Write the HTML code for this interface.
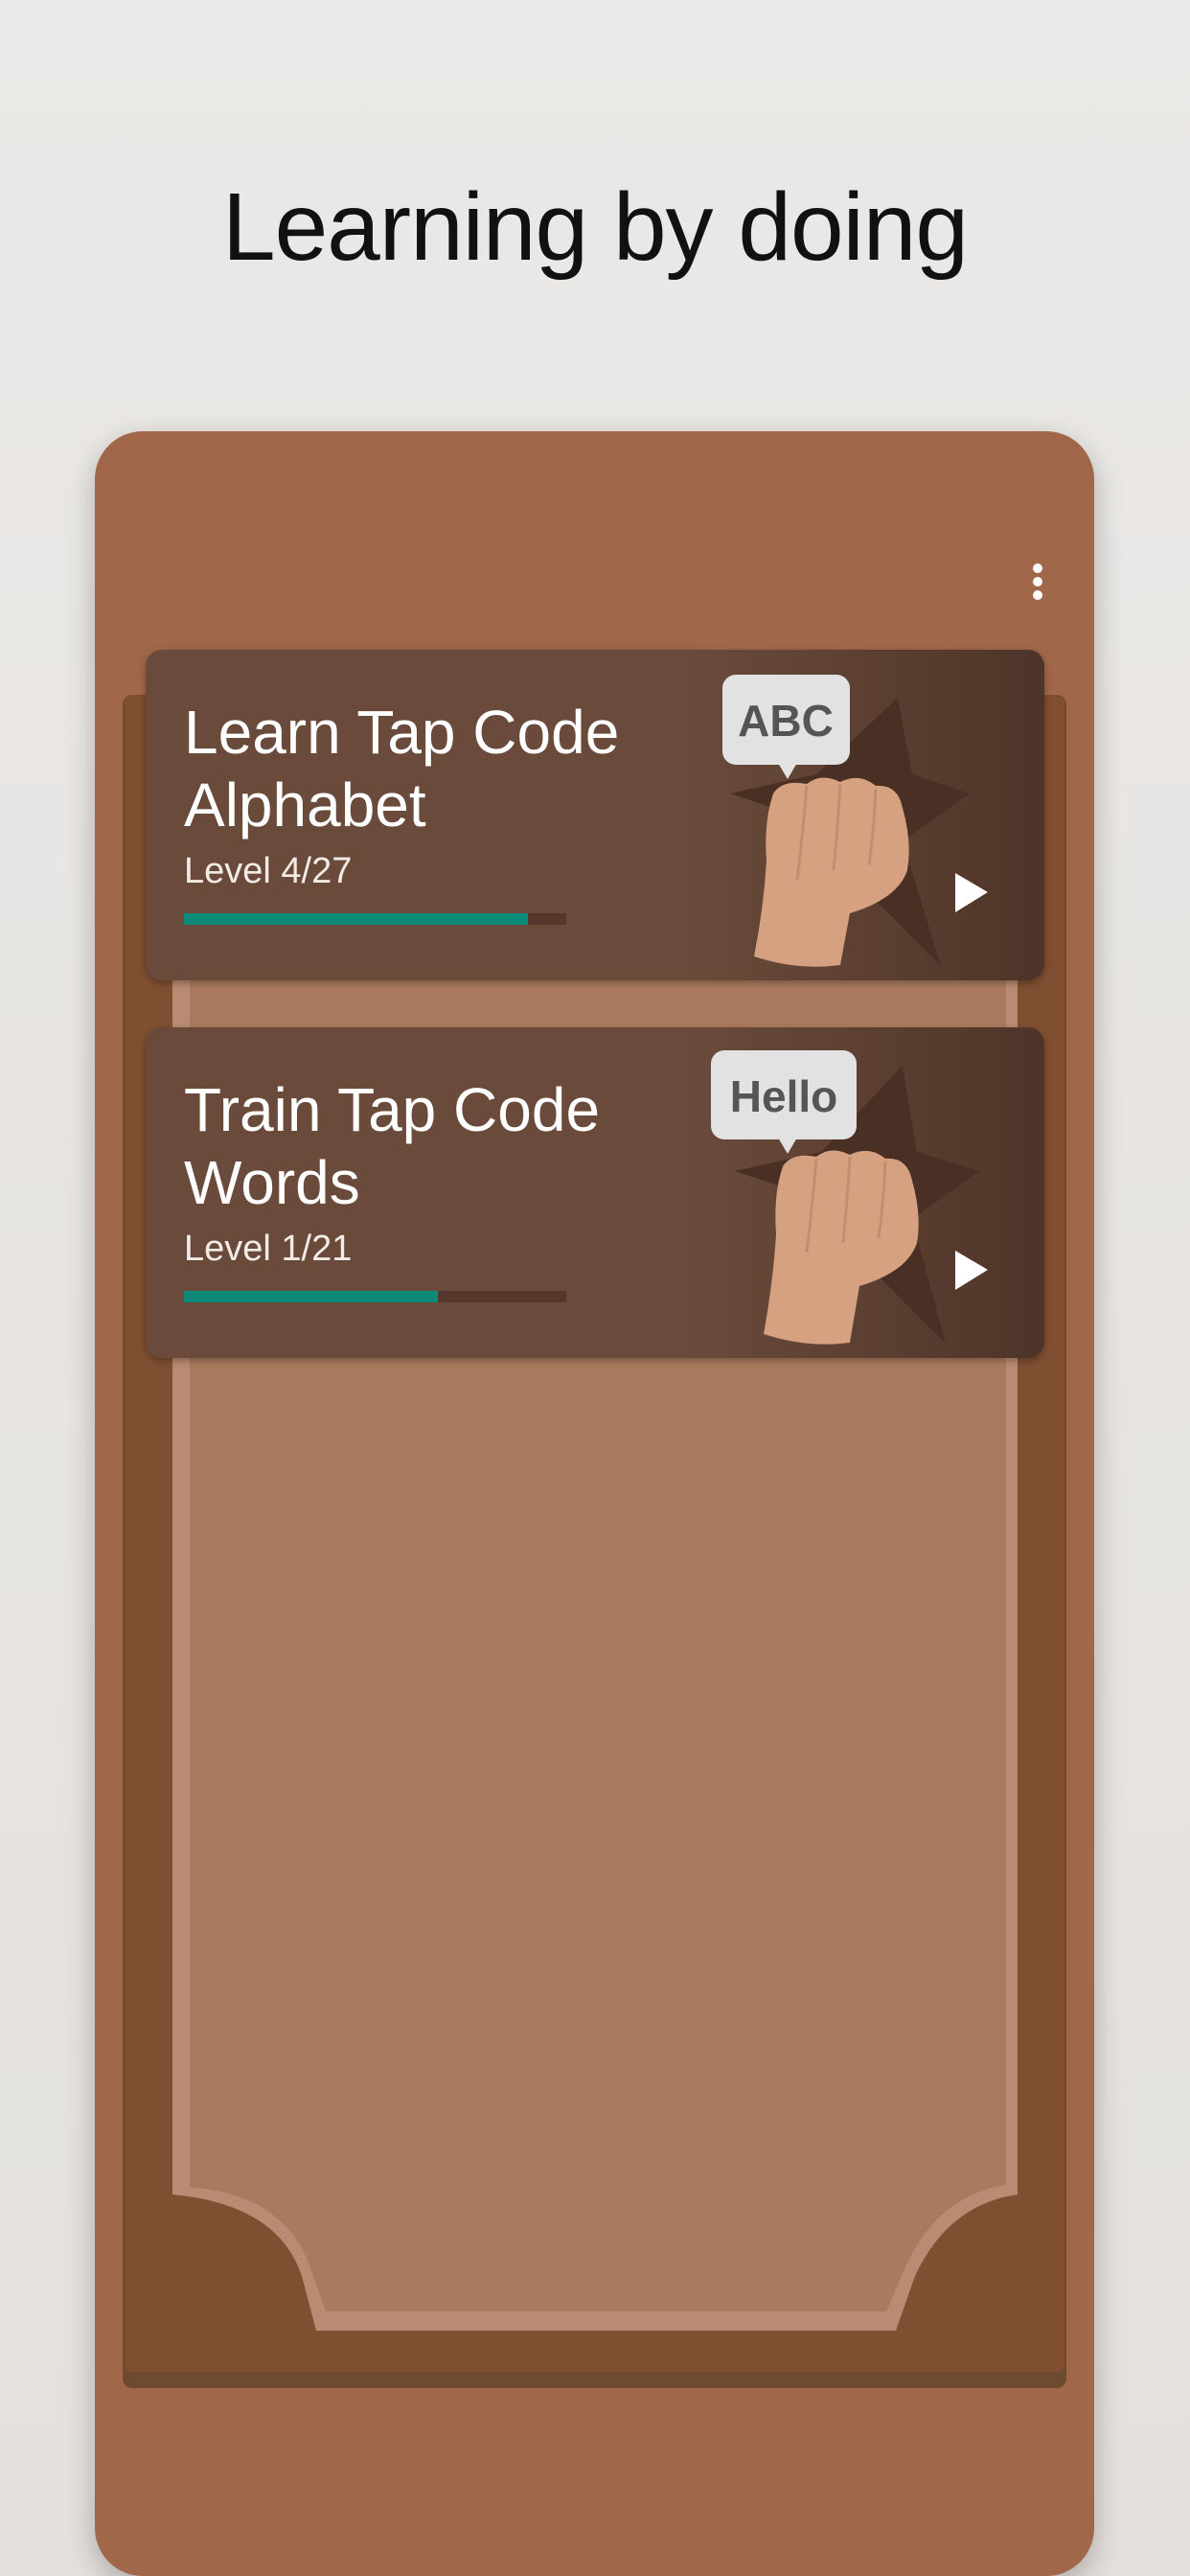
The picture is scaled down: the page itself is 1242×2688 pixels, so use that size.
<!DOCTYPE html>
<html><head><meta charset="utf-8"><style>
html,body{margin:0;padding:0;overflow:hidden}
body{width:1242px;height:2688px;overflow:hidden;position:relative;background:linear-gradient(#ebe9e7,#e3e0dd);font-family:"Liberation Sans",sans-serif}
.title{position:absolute;top:180px;left:0;width:1242px;text-align:center;font-size:100px;color:#111;letter-spacing:-1px}
.phone{position:absolute;left:99px;top:450px;width:1043px;height:2238px;background:#a0674a;border-radius:50px;box-shadow:0 10px 30px rgba(0,0,0,.25)}
.card{position:absolute;left:152px;width:938px;height:345px;border-radius:17px;background:linear-gradient(90deg,#6a4b3b 0%,#6a4b3b 60%,#4e3428 100%);box-shadow:0 3px 8px rgba(0,0,0,.3);overflow:hidden}
.h{position:absolute;left:40px;color:#fff;font-size:64px;line-height:76px;top:48px}
.lv{position:absolute;left:40px;top:210px;color:#f3ebe6;font-size:38px}
.bar{position:absolute;left:40px;top:275px;width:399px;height:12px;background:#55372b}
.bar i{display:block;height:12px;background:#0e8a78}
.dot{position:absolute;left:1078px;width:10px;height:10px;border-radius:50%;background:#fff}
</style></head><body>
<div class="title">Learning by doing</div>
<div class="phone"></div>
<svg style="position:absolute;left:0;top:0" width="1242" height="2688">
<rect x="128" y="725" width="985" height="1767" rx="10" fill="#6e4a30"/>
<rect x="130" y="725" width="981" height="1750" rx="8" fill="#804f32"/>
<path d="M180 760 H1062 V2290 Q990 2300 955 2375 L935 2432 H330 L315 2375 Q290 2300 180 2290 Z" fill="#b88b72"/>
<path d="M198 760 H1050 V2280 Q980 2290 945 2365 L925 2412 H340 L325 2370 Q300 2290 198 2282 Z" fill="#ab7a5e"/>
</svg>
<div class="dot" style="top:588px"></div><div class="dot" style="top:602px"></div><div class="dot" style="top:616px"></div>

<div class="card" style="top:678px">
<div class="h">Learn Tap Code<br>Alphabet</div>
<div class="lv">Level 4/27</div>
<div class="bar"><i style="width:359px"></i></div>
<svg style="position:absolute;left:0;top:0" width="938" height="345">
<path d="M785 50 L800 130 L860 150 L790 200 L830 330 L740 240 L650 250 L700 180 L610 150 L700 130 Z" fill="#4a3024"/>
<path d="M655 150 Q665 135 690 140 Q705 128 725 138 Q745 128 762 142 Q785 140 790 165 Q800 200 795 230 Q785 260 735 275 L725 329 Q680 335 635 320 Q645 270 648 220 Q645 180 655 150 Z" fill="#d5a181"/>
<path d="M690 142 Q685 200 680 240 M725 140 Q722 190 718 230 M762 145 Q760 190 755 225" stroke="#c08e70" stroke-width="3" fill="none"/>
<rect x="602" y="26" width="133" height="94" rx="14" fill="#e2e2e2"/>
<path d="M660 118 L670 135 L680 118 Z" fill="#e2e2e2"/>
<text x="668" y="90" text-anchor="middle" font-family="Liberation Sans" font-weight="bold" font-size="46" fill="#555">ABC</text>
<path d="M845 233 L845 274 L879 253 Z" fill="#fff"/>
</svg>
</div>

<div class="card" style="top:1072px">
<div class="h">Train Tap Code<br>Words</div>
<div class="lv">Level 1/21</div>
<div class="bar"><i style="width:265px"></i></div>
<svg style="position:absolute;left:0;top:0" width="938" height="345">
<path d="M790 40 L805 130 L870 150 L800 200 L835 330 L745 240 L655 250 L705 180 L615 150 L705 130 Z" fill="#4a3024"/>
<path d="M665 145 Q675 130 700 135 Q715 123 735 133 Q755 123 772 137 Q795 135 800 160 Q810 195 805 225 Q795 255 745 270 L735 329 Q690 335 645 320 Q655 265 658 215 Q655 175 665 145 Z" fill="#d5a181"/>
<path d="M700 137 Q695 195 690 235 M735 135 Q732 185 728 225 M772 140 Q770 185 765 220" stroke="#c08e70" stroke-width="3" fill="none"/>
<rect x="590" y="24" width="152" height="93" rx="14" fill="#e2e2e2"/>
<path d="M660 115 L670 132 L680 115 Z" fill="#e2e2e2"/>
<text x="666" y="88" text-anchor="middle" font-family="Liberation Sans" font-weight="bold" font-size="46" fill="#555">Hello</text>
<path d="M845 233 L845 274 L879 253 Z" fill="#fff"/>
</svg>
</div>
</body></html>
